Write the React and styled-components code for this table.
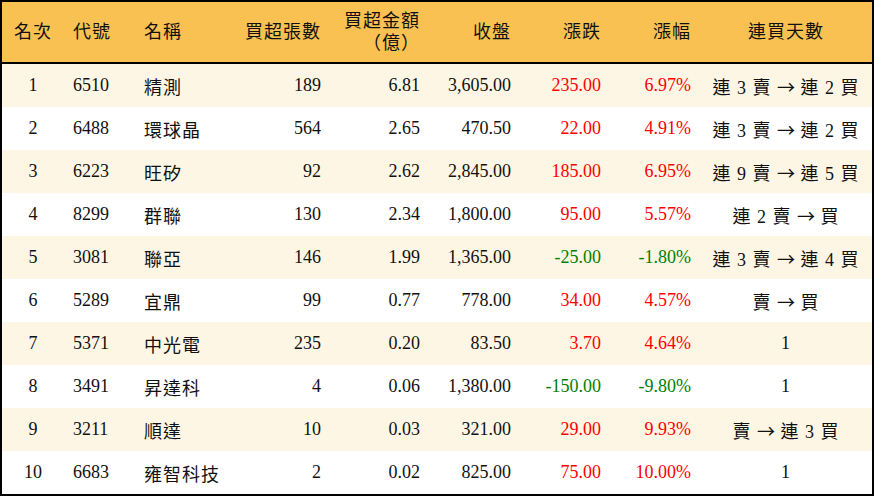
import React from 'react';
import styled, { createGlobalStyle } from 'styled-components';

const GlobalStyle = createGlobalStyle`
  html, body {
    margin: 0;
    padding: 0;
    background: #ffffff;
  }
  body {
    font-family: "Liberation Serif", "Noto Sans CJK TC", serif;
  }
`;

const COLUMNS = '62px 71px 95px 100px 99px 91px 90px 90px 1fr';

const Frame = styled.div`
  width: 874px;
  box-sizing: border-box;
  border: 2px solid #000;
  background: #fff;
`;

const HeaderRow = styled.div`
  display: grid;
  grid-template-columns: ${COLUMNS};
  height: 60px;
  background-color: #f9c152;
  border-bottom: 2px solid #000;
`;

const HeadCell = styled.div`
  display: flex;
  align-items: center;
  justify-content: ${props => props.$align === 'right' ? 'flex-end' : props.$align === 'center' ? 'center' : 'flex-start'};
  text-align: ${props => props.$align || 'left'};
  padding: 0 9px;
  font-size: 18px;
  line-height: 22px;
  letter-spacing: 1px;
  color: #111;
`;

const Row = styled.div`
  display: grid;
  grid-template-columns: ${COLUMNS};
  height: 43px;
  background-color: ${props => props.$shade ? '#fef6e4' : '#ffffff'};
`;

const toneColor = {
  up: '#ff0000',
  down: '#008000',
  plain: '#111111',
};

const Cell = styled.div`
  display: flex;
  align-items: center;
  justify-content: ${props => props.$align === 'right' ? 'flex-end' : props.$align === 'center' ? 'center' : 'flex-start'};
  padding: 0 9px;
  font-size: 18px;
  letter-spacing: ${props => props.$cjk ? '1px' : '0'};
  color: ${props => toneColor[props.$tone || 'plain']};
  white-space: pre;
`;

// the arrow in the streak column is a long, thin one
const Arrow = styled.span`
  font-family: "Noto Sans CJK TC", sans-serif;
  font-size: 18px;
  letter-spacing: 0;
`;

const headers = [
  { label: '名次', align: 'center' },
  { label: '代號', align: 'left' },
  { label: '名稱', align: 'left' },
  { label: '買超張數', align: 'right' },
  { label: '買超金額（億）', align: 'right' },
  { label: '收盤', align: 'right' },
  { label: '漲跌', align: 'right' },
  { label: '漲幅', align: 'right' },
  { label: '連買天數', align: 'center' },
];

const rows = [
  ['1', '6510', '精測', '189', '6.81', '3,605.00', '235.00', '6.97%', '連 3 賣 → 連 2 買'],
  ['2', '6488', '環球晶', '564', '2.65', '470.50', '22.00', '4.91%', '連 3 賣 → 連 2 買'],
  ['3', '6223', '旺矽', '92', '2.62', '2,845.00', '185.00', '6.95%', '連 9 賣 → 連 5 買'],
  ['4', '8299', '群聯', '130', '2.34', '1,800.00', '95.00', '5.57%', '連 2 賣 → 買'],
  ['5', '3081', '聯亞', '146', '1.99', '1,365.00', '-25.00', '-1.80%', '連 3 賣 → 連 4 買'],
  ['6', '5289', '宜鼎', '99', '0.77', '778.00', '34.00', '4.57%', '賣 → 買'],
  ['7', '5371', '中光電', '235', '0.20', '83.50', '3.70', '4.64%', '1'],
  ['8', '3491', '昇達科', '4', '0.06', '1,380.00', '-150.00', '-9.80%', '1'],
  ['9', '3211', '順達', '10', '0.03', '321.00', '29.00', '9.93%', '賣 → 連 3 買'],
  ['10', '6683', '雍智科技', '2', '0.02', '825.00', '75.00', '10.00%', '1'],
];

const Streak = ({ text }) => {
  const parts = text.split(' → ');
  if (parts.length < 2) return text;
  return (
    <>
      {parts[0] + ' '}
      <Arrow>→</Arrow>
      {' ' + parts[1]}
    </>
  );
};

const App = () => (
  <>
    <GlobalStyle />
    <Frame>
      <HeaderRow>
        {headers.map(h => (
          <HeadCell key={h.label} $align={h.align}>{h.label}</HeadCell>
        ))}
      </HeaderRow>
      {rows.map((r, i) => {
        const tone = r[6].startsWith('-') ? 'down' : 'up';
        return (
          <Row key={r[0]} $shade={i % 2 === 0}>
            <Cell $align="center">{r[0]}</Cell>
            <Cell>{r[1]}</Cell>
            <Cell $cjk>{r[2]}</Cell>
            <Cell $align="right">{r[3]}</Cell>
            <Cell $align="right">{r[4]}</Cell>
            <Cell $align="right">{r[5]}</Cell>
            <Cell $align="right" $tone={tone}>{r[6]}</Cell>
            <Cell $align="right" $tone={tone}>{r[7]}</Cell>
            <Cell $align="center" $cjk><Streak text={r[8]} /></Cell>
          </Row>
        );
      })}
    </Frame>
  </>
);

export default App;
